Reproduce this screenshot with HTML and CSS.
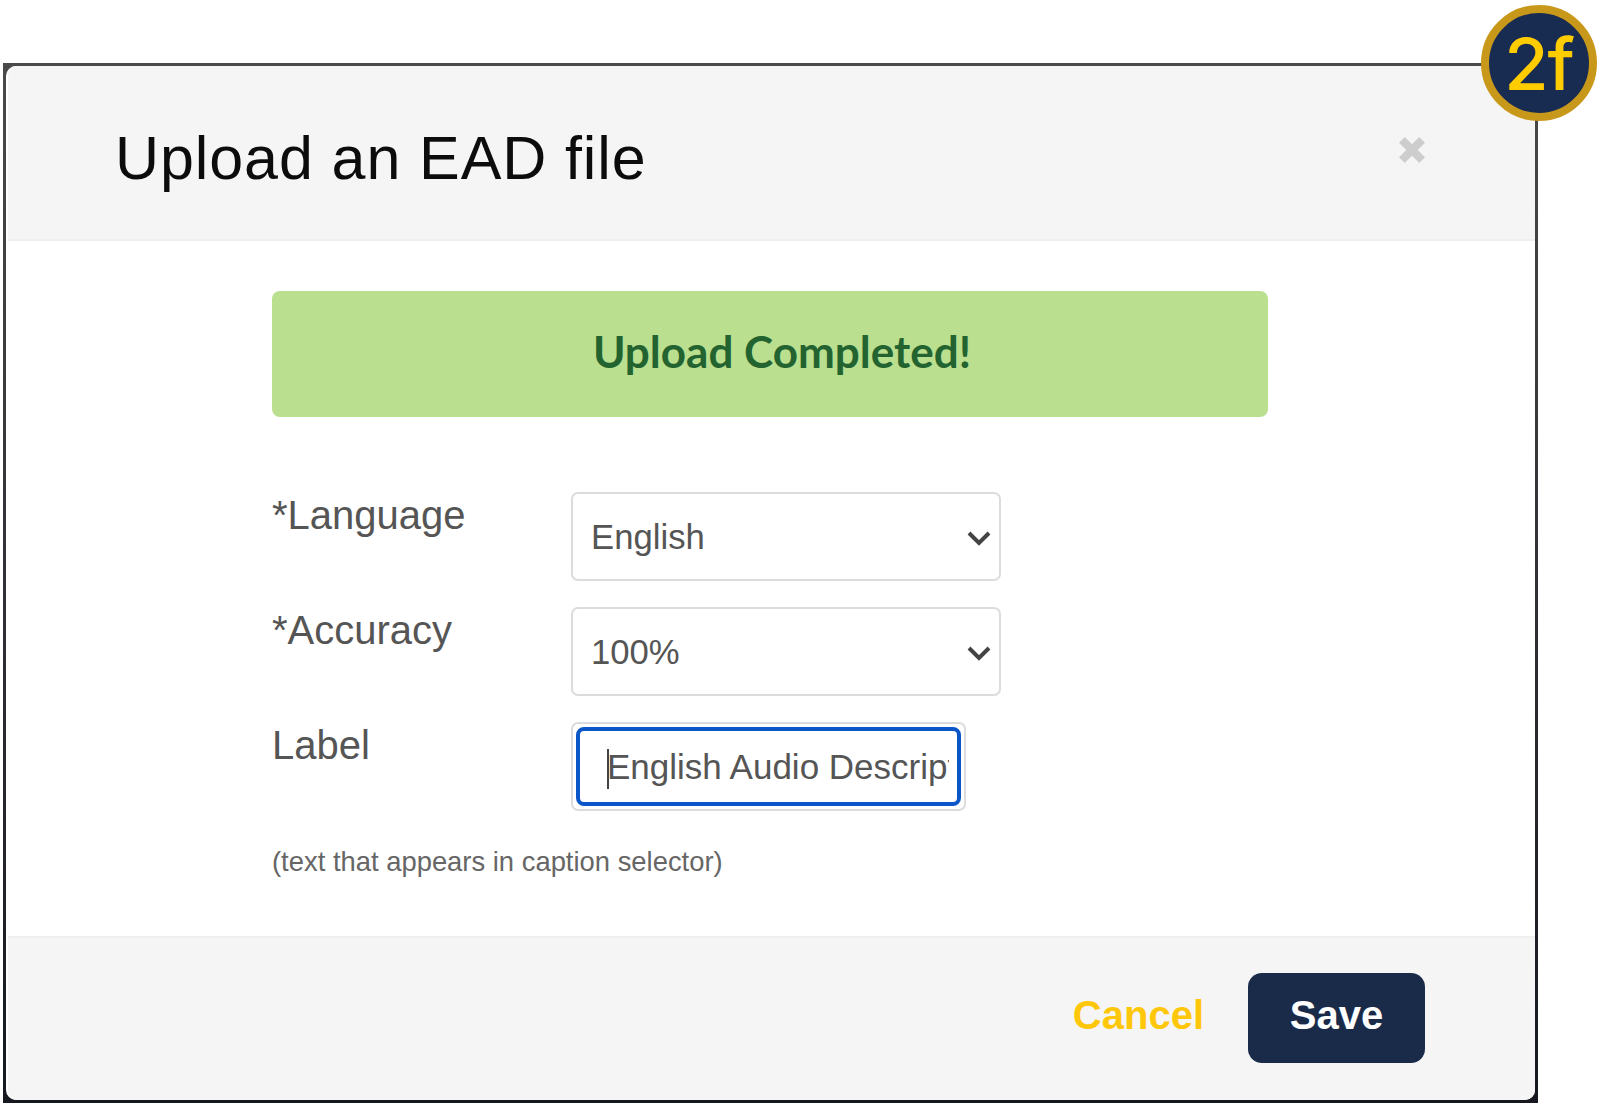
FILE: index.html
```html
<!DOCTYPE html>
<html lang="en">

<head>
    <meta charset="UTF-8" />
    <title>Upload an EAD file</title>
    <link rel="stylesheet" href="styles.css">
</head>

<body>
    <div class="page">
        <div class="modal">
            <div class="modal-inner">
                <div class="modal-header">
                    <h2>Upload an EAD file</h2>
                    <svg class="close" viewBox="3 3 18 18" width="26" height="26" aria-hidden="true">
                        <path d="M3 7 L7 3 L12 8 L17 3 L21 7 L16 12 L21 17 L17 21 L12 16 L7 21 L3 17 L8 12 Z" />
                    </svg>
                </div>

                <div class="modal-body">
                    <div class="alert">Upload Completed!</div>

                    <div class="row">
                        <label class="field-label">*Language</label>
                        <div class="select">
                            <span>English</span>
                            <svg class="chevron" viewBox="0 0 24 16" width="24" height="16" aria-hidden="true">
                                <path d="M2 3 L12 13 L22 3" />
                            </svg>
                        </div>
                    </div>

                    <div class="row">
                        <label class="field-label">*Accuracy</label>
                        <div class="select">
                            <span>100%</span>
                            <svg class="chevron" viewBox="0 0 24 16" width="24" height="16" aria-hidden="true">
                                <path d="M2 3 L12 13 L22 3" />
                            </svg>
                        </div>
                    </div>

                    <div class="row">
                        <label class="field-label">Label</label>
                        <div class="text-input">
                            <div class="text-focus">
                                <span class="caret"></span>
                                <span class="text-value">English Audio Description</span>
                            </div>
                        </div>
                    </div>

                    <p class="hint">(text that appears in caption selector)</p>
                </div>

                <div class="modal-footer">
                    <a class="cancel">Cancel</a>
                    <button class="save" type="button">Save</button>
                </div>
            </div>
        </div>

        <div class="badge"><span>2f</span></div>
    </div>
</body>

</html>
```

FILE: styles.css
```css
* {
    box-sizing: border-box;
}

html,
body {
    margin: 0;
    padding: 0;
    background: #fff;
}

body {
    font-family: "Liberation Sans", Arial, sans-serif;
    height: 1105px;
    overflow: hidden;
}

.page {
    position: relative;
    padding: 63px 0 0 3px;
}

/* square dark frame, the rounded dialog sits inside it */
.modal {
    width: 1535px;
    height: 1040px;
    padding: 3px;
    background: linear-gradient(#4a4a4a, #15181f);
}

.modal-inner {
    height: 100%;
    display: flex;
    flex-direction: column;
    border-left: 2px solid #fff;
    border-radius: 10px;
    background: #fff;
    overflow: hidden;
}

.modal-header {
    height: 175px;
    flex: none;
    background: #f5f5f5;
    border-bottom: 2px solid #efefef;
    padding: 0 110px 0 107px;
    display: flex;
    justify-content: space-between;
    align-items: flex-start;
}

.modal-header h2 {
    margin: 57px 0 0;
    font-size: 61px;
    line-height: 70px;
    font-weight: normal;
    letter-spacing: 0.9px;
    color: #0c0c0c;
}

.close {
    margin-top: 71px;
    fill: #cdcdcd;
}

.modal-body {
    flex: 1;
    padding: 50px 0 0 264px;
}

.alert {
    width: 996px;
    height: 126px;
    background: #badf8f;
    border-radius: 8px;
    color: #22632f;
    font-family: Lato, sans-serif;
    font-weight: bold;
    font-size: 44px;
    line-height: 120px;
    text-align: center;
    padding-left: 24px;
    margin-bottom: 75px;
}

.row {
    display: flex;
    margin-bottom: 26px;
}

.field-label {
    width: 299px;
    flex: none;
    padding-top: 1px;
    font-size: 40px;
    line-height: 44px;
    color: #555;
}

.select {
    width: 430px;
    height: 89px;
    border: 2px solid #dcdcdc;
    border-radius: 7px;
    background: #fff;
    display: flex;
    align-items: center;
    justify-content: space-between;
    padding: 2px 8px 0 18px;
    font-size: 34.7px;
    color: #555;
}

.chevron {
    fill: none;
    stroke: #444;
    stroke-width: 4;
}

.text-input {
    width: 395px;
    height: 89px;
    border: 2px solid #dcdcdc;
    border-radius: 7px;
    padding: 3px;
    background: #fff;
}

.text-focus {
    height: 100%;
    border: 4px solid #0a55c8;
    border-radius: 8px;
    display: flex;
    align-items: center;
    padding: 0 8px 0 27px;
    overflow: hidden;
    position: relative;
}

.caret {
    position: absolute;
    left: 27px;
    top: 18px;
    width: 2px;
    height: 40px;
    background: #444;
}

.text-value {
    font-size: 35px;
    color: #555;
    white-space: nowrap;
    overflow: hidden;
}

.hint {
    margin: 35px 0 0;
    font-size: 27.4px;
    color: #666;
}

.modal-footer {
    height: 164px;
    flex: none;
    background: #f5f5f5;
    border-top: 2px solid #efefef;
    padding: 35px 110px 0 0;
    display: flex;
    justify-content: flex-end;
    align-items: flex-start;
    gap: 44px;
}

.cancel {
    font-size: 40px;
    line-height: 84px;
    font-weight: bold;
    color: #ffc709;
}

.save {
    width: 177px;
    height: 90px;
    border: none;
    border-radius: 14px;
    background: #1a2b4a;
    color: #fff;
    font-family: inherit;
    font-size: 40px;
    line-height: 84px;
    font-weight: bold;
    padding: 0 0 6px;
}

.badge {
    position: absolute;
    top: 5px;
    left: 1481px;
    width: 116px;
    height: 116px;
    border-radius: 50%;
    border: 8px solid #c8981a;
    background: #182c52;
    color: #ffcc00;
    display: flex;
    align-items: center;
    justify-content: center;
    font-family: Inter, "Liberation Sans", sans-serif;
    font-size: 72px;
    font-weight: 500;
    letter-spacing: -1px;
}
```
